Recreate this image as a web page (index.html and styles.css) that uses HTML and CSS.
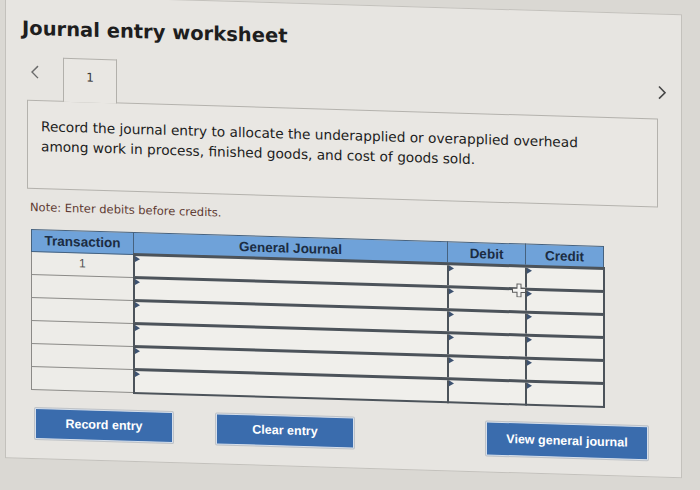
FILE: index.html
```html
<!DOCTYPE html>
<html lang="en">
<head>
<meta charset="utf-8">
<title>Journal entry worksheet</title>
<link rel="stylesheet" href="styles.css">
</head>
<body>
<div class="screen">
  <div class="panel">
    <h1 class="title">Journal entry worksheet</h1>
    <div class="tabs">
      <svg class="nav prev" width="12" height="14" viewBox="0 0 12 14"><polyline points="9,1 3,7 9,13" fill="none" stroke="#6b6b6b" stroke-width="1.4"/></svg>
      <div class="tab">1</div>
      <svg class="nav next" width="12" height="14" viewBox="0 0 12 14"><polyline points="3,1 9,7 3,13" fill="none" stroke="#474747" stroke-width="1.6"/></svg>
    </div>
    <div class="instruction">
      <p>Record the journal entry to allocate the underapplied or overapplied overhead among work in process, finished goods, and cost of goods sold.</p>
    </div>
    <p class="note">Note: Enter debits before credits.</p>
    <div class="journal">
      <table class="grid">
        <colgroup><col class="c-txn"><col class="c-gj"><col class="c-amt"><col class="c-amt"></colgroup>
        <thead>
          <tr><th>Transaction</th><th>General Journal</th><th>Debit</th><th>Credit</th></tr>
        </thead>
        <tbody>
          <tr><td class="txn">1</td><td class="inp"></td><td class="inp"></td><td class="inp"></td></tr>
          <tr><td class="txn"></td><td class="inp"></td><td class="inp"></td><td class="inp"></td></tr>
          <tr><td class="txn"></td><td class="inp"></td><td class="inp"></td><td class="inp"></td></tr>
          <tr><td class="txn"></td><td class="inp"></td><td class="inp"></td><td class="inp"></td></tr>
          <tr><td class="txn"></td><td class="inp"></td><td class="inp"></td><td class="inp"></td></tr>
          <tr><td class="txn"></td><td class="inp"></td><td class="inp"></td><td class="inp"></td></tr>
        </tbody>
      </table>
      <svg class="cursor" width="14" height="14" viewBox="0 0 14 14"><path d="M5 0.5h4v4.5h4.5v4H9v4.5H5V9H0.5V5H5z" fill="#f4f4f2" stroke="#5a5a5a" stroke-width="1"/></svg>
    </div>
    <div class="actions">
      <button class="btn btn-record">Record entry</button>
      <button class="btn btn-clear">Clear entry</button>
      <button class="btn btn-view">View general journal</button>
    </div>
  </div>
</div>
</body>
</html>
```
FILE: styles.css
```css
* { box-sizing: border-box; }
html, body { margin: 0; height: 100%; }
body {
  background: #dad8d3;
  overflow: hidden;
  font-family: "DejaVu Sans", Verdana, sans-serif;
}
.screen {
  transform: skewY(1.7deg);
  transform-origin: 0 0;
}
.panel {
  margin: -6px 0 0 5px;
  width: 677px;
  height: 464px;
  border: 1px solid #c3c1bc;
  background: #e7e5e1;
}
.title {
  margin: 21px 0 0 16px;
  font: bold 19.5px/24px "DejaVu Sans", Verdana, sans-serif;
  color: #1e1e1e;
}
.tabs {
  display: flex;
  align-items: flex-start;
  height: 43px;
  margin-top: 16px;
  padding: 0 13px 0 23px;
}
.nav { display: block; flex: none; }
.prev { margin-top: 8px; }
.next { margin-top: 10px; margin-left: auto; }
.tab {
  position: relative;
  z-index: 1;
  margin-left: 22px;
  width: 54px;
  height: 44px;
  border: 1px solid #b2b0ab;
  border-bottom: none;
  background: #e9e7e3;
  text-align: center;
  font-size: 12px;
  line-height: 14px;
  padding-top: 11px;
  color: #3a3a3a;
}
.instruction {
  margin-left: 21px;
  width: 631px;
  height: 89px;
  border: 1px solid #b4b2ad;
  background: #e9e7e3;
  padding: 15px 40px 0 13px;
}
.instruction p {
  margin: 0;
  font-size: 13.7px;
  line-height: 20px;
  color: #1c1c1c;
}
.note {
  margin: 11px 0 0 24px;
  font-size: 11.5px;
  line-height: 14px;
  color: #5e3a32;
}
.journal {
  position: relative;
  margin: 15px 0 0 25px;
  width: 572px;
}
.grid {
  border-collapse: collapse;
  table-layout: fixed;
  width: 572px;
}
.c-txn { width: 102px; }
.c-gj { width: 314px; }
.c-amt { width: 78px; }
.grid th {
  height: 22px;
  padding: 0;
  background: #6fa2d9;
  color: #1b2c42;
  font: bold 13.5px "Liberation Sans", Arial, sans-serif;
  border: 1px solid #46627f;
  text-align: center;
}
.grid td {
  height: 23px;
  padding: 0;
  vertical-align: top;
}
.grid td.txn {
  border: 1px solid #8b8a87;
  background: #edece8;
  text-align: center;
  font: 12px/20px "Liberation Sans", Arial, sans-serif;
  color: #555;
}
.grid td.inp {
  border: 2px solid #4c535a;
  border-top-width: 3px;
  background: #f0efeb;
}
.grid td.inp::before {
  content: "";
  display: block;
  width: 0;
  height: 0;
  border-top: 3px solid transparent;
  border-bottom: 3px solid transparent;
  border-left: 5px solid #3d5270;
}
.cursor {
  position: absolute;
  left: 481px;
  top: 40px;
}
.actions {
  display: flex;
  align-items: flex-start;
  margin: 17px 0 0 29px;
}
.btn {
  height: 31px;
  width: 138px;
  padding: 0;
  background: #3a6cad;
  color: #fff;
  border: 1px solid #d6dfeb;
  border-radius: 1px;
  box-shadow: 0 0 0 1px rgba(70, 90, 120, 0.25);
  font: bold 12.5px "Liberation Sans", Arial, sans-serif;
}
.btn-clear { margin-left: 43px; }
.btn-view { margin-left: 132px; width: 162px; height: 34px; }
```
